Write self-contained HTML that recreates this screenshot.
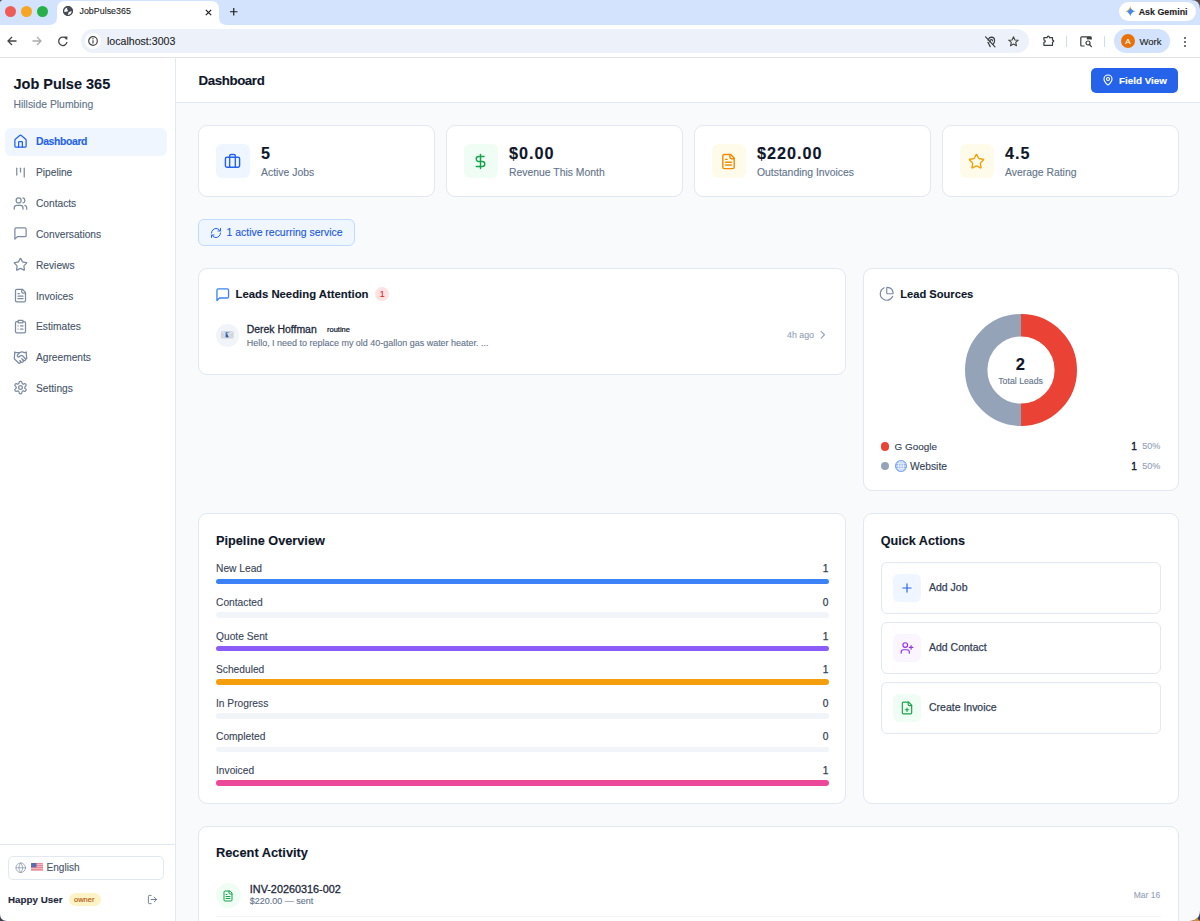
<!DOCTYPE html><html><head><meta charset="utf-8"><title>JobPulse365</title>
<style>
html,body{margin:0;padding:0;width:1200px;height:921px;overflow:hidden;background:#f8fafc;font-family:"Liberation Sans",sans-serif;}
.a{position:absolute;box-sizing:border-box;}
.t{position:absolute;line-height:1;white-space:nowrap;-webkit-text-stroke:0.12px currentColor;}
svg.a{overflow:visible;}
</style></head><body>

<div class="a" style="left:0px;top:0px;width:1200px;height:25px;background:#d3e3fd;"></div>
<div class="a" style="left:5px;top:5.5px;width:11px;height:11px;border-radius:50%;background:#ee5d55;"></div>
<div class="a" style="left:21px;top:5.5px;width:11px;height:11px;border-radius:50%;background:#f5a623;"></div>
<div class="a" style="left:37px;top:5.5px;width:11px;height:11px;border-radius:50%;background:#27b04a;"></div>
<svg class="a" style="left:49px;top:0px;" width="178" height="26" viewBox="0 0 178 26"><path d="M0 25 Q8 25 8 17 L8 9 Q8 1 16 1 L162 1 Q170 1 170 9 L170 17 Q170 25 178 25 L178 26 L0 26 Z" fill="#fff"/></svg>
<svg class="a" style="left:63px;top:6px;" width="10" height="10" viewBox="0 0 10 10"><circle cx="5" cy="5" r="5" fill="#474a52"/><path d="M1.5 3.6 Q2.6 1.8 4.4 1.5 Q3.6 2.8 4.3 3.6 Q5.3 4.4 4.6 5.4 Q3 5.4 1.3 5.9 Q1.1 4.6 1.5 3.6Z" fill="#fff"/><path d="M8.7 5 Q8.8 7.4 6.8 8.6 Q5.6 9.1 4.6 8.9 Q5.8 7.6 5.2 6.8 Q6.2 5.4 8.7 5Z" fill="#fff"/><circle cx="5" cy="5" r="4.5" stroke="#474a52" stroke-width="1" fill="none"/></svg>
<div class="t" style="left:79.50px;top:6.77px;font-size:8.9px;font-weight:400;color:#1f1f1f;">JobPulse365</div>
<svg class="a" style="left:204.5px;top:8.5px;" width="7" height="7" viewBox="0 0 7 7"><path d="M.8 .8 L6.2 6.2 M6.2 .8 L.8 6.2" stroke="#1f1f1f" stroke-width="1.2"/></svg>
<svg class="a" style="left:229.5px;top:7.5px;" width="7.5" height="7.5" viewBox="0 0 7.5 7.5"><path d="M3.75 0 V7.5 M0 3.75 H7.5" stroke="#1f1f1f" stroke-width="1.2"/></svg>
<div class="a" style="left:1119px;top:1.5px;width:77px;height:19.5px;background:#fff;border-radius:10px;"></div>
<svg class="a" style="left:1124.5px;top:5.5px;" width="10.5" height="10.5" viewBox="0 0 10.5 10.5"><defs><linearGradient id="gg" x1="0" y1="0" x2="1" y2="1"><stop offset="0" stop-color="#f0444a"/><stop offset=".3" stop-color="#f9a825"/><stop offset=".45" stop-color="#4285f4"/><stop offset=".7" stop-color="#4285f4"/><stop offset="1" stop-color="#34a853"/></linearGradient></defs><path d="M5.25 0 Q5.9 4.6 10.5 5.25 Q5.9 5.9 5.25 10.5 Q4.6 5.9 0 5.25 Q4.6 4.6 5.25 0Z" fill="url(#gg)"/></svg>
<div class="t" style="left:1138.70px;top:8.07px;font-size:8.9px;font-weight:700;color:#1f1f1f;">Ask Gemini</div>
<div class="a" style="left:0px;top:25px;width:1200px;height:32px;background:#fff;"></div>
<div class="a" style="left:0px;top:57px;width:1200px;height:1px;background:#e3e3e3;"></div>
<svg class="a" style="left:7px;top:36px;" width="10" height="10" viewBox="0 0 10 10"><path d="M9.5 5 H1 M5 1 L1 5 L5 9" stroke="#444746" stroke-width="1.3" fill="none"/></svg>
<svg class="a" style="left:32px;top:36px;" width="10" height="10" viewBox="0 0 10 10"><path d="M.5 5 H9 M5 1 L9 5 L5 9" stroke="#a8abad" stroke-width="1.3" fill="none"/></svg>
<svg class="a" style="left:57.5px;top:36px;" width="10" height="10" viewBox="0 0 10 10"><path d="M8.6 3.4 A4.2 4.2 0 1 0 9 6" stroke="#444746" stroke-width="1.3" fill="none"/><path d="M6.2 .6 L9.4 .6 L9.4 3.8 Z" fill="#444746"/></svg>
<div class="a" style="left:81px;top:29px;width:948px;height:24px;background:#edf2fa;border-radius:12px;"></div>
<div class="a" style="left:84.5px;top:33.3px;width:16px;height:16px;background:#fff;border-radius:50%;"></div>
<svg class="a" style="left:87.5px;top:36.3px;" width="10" height="10" viewBox="0 0 10 10"><circle cx="5" cy="5" r="4.3" stroke="#444746" stroke-width="1.2" fill="none"/><path d="M5 4.3 V7.6" stroke="#444746" stroke-width="1.2"/><circle cx="5" cy="2.7" r=".7" fill="#444746"/></svg>
<div class="t" style="left:107.00px;top:36.13px;font-size:10.6px;font-weight:400;color:#1f1f1f;">localhost:3003</div>
<svg class="a" style="left:984.5px;top:35.5px;" width="11" height="12" viewBox="0 0 11 12"><path d="M3.2 4.2 Q4 1.2 6.6 1.2 Q9.6 1.4 9.6 4.6 Q9.6 6.8 8 8.2" stroke="#3c4043" stroke-width="1.2" fill="none" stroke-linecap="round"/><path d="M5 6.6 Q4.6 3.6 6.6 3.6 Q7.8 3.8 7.4 5.4" stroke="#3c4043" stroke-width="1.1" fill="none"/><path d="M3 6.4 L5.2 10.6" stroke="#3c4043" stroke-width="1.2" stroke-linecap="round"/><path d="M.6 .8 L10 10.8" stroke="#3c4043" stroke-width="1.2" stroke-linecap="round"/></svg>
<svg class="a" style="left:1007.5px;top:35.5px;" width="11" height="11" viewBox="0 0 11 11"><path d="M5.5 .8 L6.9 4 L10.3 4.2 L7.7 6.4 L8.5 9.8 L5.5 8 L2.5 9.8 L3.3 6.4 L.7 4.2 L4.1 4 Z" stroke="#444746" stroke-width="1.1" fill="none" stroke-linejoin="round"/></svg>
<svg class="a" style="left:1043px;top:35px;" width="11.5" height="11.5" viewBox="0 0 11.5 11.5"><path d="M.9 2.6 H4.1 Q4.3 1.1 5.3 1.1 Q6.3 1.1 6.5 2.6 H9.5 V5.1 Q10.8 5.3 10.8 6.1 Q10.8 6.9 9.5 7.1 V10.3 H.9 V7.3 Q2.3 7.1 2.3 6.2 Q2.3 5.2 .9 5 Z" stroke="#3c4043" stroke-width="1.2" fill="none" stroke-linejoin="round"/></svg>
<div class="a" style="left:1066px;top:35.5px;width:1.2px;height:11px;background:#c9dcfa;"></div>
<svg class="a" style="left:1080px;top:36px;" width="12.5" height="11.5" viewBox="0 0 12.5 11.5"><path d="M4.6 10 H1.8 Q.8 10 .8 9 V1.8 Q.8 .8 1.8 .8 H10.4 Q11.2 .8 11.2 1.8 V3.6" stroke="#3c4043" stroke-width="1.2" fill="none"/><rect x="6.8" y=".8" width="4.4" height="2.6" fill="#3c4043"/><circle cx="8" cy="7" r="2" stroke="#3c4043" stroke-width="1.2" fill="none"/><path d="M9.5 8.5 L11.4 10.6" stroke="#3c4043" stroke-width="1.2" stroke-linecap="round"/></svg>
<div class="a" style="left:1104px;top:35.5px;width:1.2px;height:11px;background:#c9dcfa;"></div>
<div class="a" style="left:1114px;top:29px;width:55.5px;height:24px;background:#d3e3fd;border-radius:12px;"></div>
<div class="a" style="left:1121px;top:34px;width:14px;height:14px;background:#e8710a;border-radius:50%;"></div>
<div class="t" style="left:928.00px;width:400px;text-align:center;top:37.73px;font-size:8px;font-weight:400;color:#fff;">A</div>
<div class="t" style="left:1139.50px;top:37.26px;font-size:9.5px;font-weight:400;color:#1f1f1f;">Work</div>
<div class="a" style="left:1184px;top:36.5px;width:2px;height:2px;background:#444746;border-radius:50%;"></div>
<div class="a" style="left:1184px;top:40.5px;width:2px;height:2px;background:#444746;border-radius:50%;"></div>
<div class="a" style="left:1184px;top:44.5px;width:2px;height:2px;background:#444746;border-radius:50%;"></div>
<div class="a" style="left:0px;top:58px;width:175px;height:863px;background:#fff;"></div>
<div class="a" style="left:175px;top:58px;width:1px;height:863px;background:#e2e8f0;"></div>
<div class="t" style="left:13.50px;top:77.43px;font-size:14.5px;font-weight:700;color:#0f172a;">Job Pulse 365</div>
<div class="t" style="left:13.50px;top:100.00px;font-size:10.4px;font-weight:400;color:#64748b;">Hillside Plumbing</div>
<div class="a" style="left:5px;top:128px;width:162px;height:28px;background:#eff6ff;border-radius:6px;"></div>
<svg class="a" style="left:12.75px;top:134.0px" width="15" height="15" viewBox="0 0 24 24" fill="none" stroke="#2563eb" stroke-width="2" stroke-linecap="round" stroke-linejoin="round"><path d="M15 21v-8a1 1 0 0 0-1-1h-4a1 1 0 0 0-1 1v8"/><path d="M3 10a2 2 0 0 1 .709-1.528l7-5.999a2 2 0 0 1 2.582 0l7 5.999A2 2 0 0 1 21 10v9a2 2 0 0 1-2 2H5a2 2 0 0 1-2-2z"/></svg>
<div class="t" style="left:36.00px;top:137.00px;font-size:10.4px;font-weight:700;color:#2563eb;letter-spacing:-0.35px;">Dashboard</div>
<svg class="a" style="left:12.75px;top:164.8px" width="15" height="15" viewBox="0 0 24 24" fill="none" stroke="#7d8ba1" stroke-width="2" stroke-linecap="round" stroke-linejoin="round"><path d="M6 5v11"/><path d="M12 5v6"/><path d="M18 5v14"/></svg>
<div class="t" style="left:36.00px;top:168.37px;font-size:10.2px;font-weight:400;color:#475569;">Pipeline</div>
<svg class="a" style="left:12.75px;top:195.6px" width="15" height="15" viewBox="0 0 24 24" fill="none" stroke="#7d8ba1" stroke-width="2" stroke-linecap="round" stroke-linejoin="round"><path d="M16 21v-2a4 4 0 0 0-4-4H6a4 4 0 0 0-4 4v2"/><circle cx="9" cy="7" r="4"/><path d="M22 21v-2a4 4 0 0 0-3-3.87"/><path d="M16 3.13a4 4 0 0 1 0 7.75"/></svg>
<div class="t" style="left:36.00px;top:199.17px;font-size:10.2px;font-weight:400;color:#475569;">Contacts</div>
<svg class="a" style="left:12.75px;top:226.4px" width="15" height="15" viewBox="0 0 24 24" fill="none" stroke="#7d8ba1" stroke-width="2" stroke-linecap="round" stroke-linejoin="round"><path d="M21 15a2 2 0 0 1-2 2H7l-4 4V5a2 2 0 0 1 2-2h14a2 2 0 0 1 2 2z"/></svg>
<div class="t" style="left:36.00px;top:229.97px;font-size:10.2px;font-weight:400;color:#475569;">Conversations</div>
<svg class="a" style="left:12.75px;top:257.2px" width="15" height="15" viewBox="0 0 24 24" fill="none" stroke="#7d8ba1" stroke-width="2" stroke-linecap="round" stroke-linejoin="round"><path d="M11.525 2.295a.53.53 0 0 1 .95 0l2.31 4.679a2.123 2.123 0 0 0 1.595 1.16l5.166.756a.53.53 0 0 1 .294.904l-3.736 3.638a2.123 2.123 0 0 0-.611 1.878l.882 5.14a.53.53 0 0 1-.771.56l-4.618-2.428a2.122 2.122 0 0 0-1.973 0L6.396 21.01a.53.53 0 0 1-.77-.56l.881-5.139a2.122 2.122 0 0 0-.611-1.879L2.16 9.795a.53.53 0 0 1 .294-.906l5.165-.755a2.122 2.122 0 0 0 1.597-1.16z"/></svg>
<div class="t" style="left:36.00px;top:260.77px;font-size:10.2px;font-weight:400;color:#475569;">Reviews</div>
<svg class="a" style="left:12.75px;top:288.0px" width="15" height="15" viewBox="0 0 24 24" fill="none" stroke="#7d8ba1" stroke-width="2" stroke-linecap="round" stroke-linejoin="round"><path d="M15 2H6a2 2 0 0 0-2 2v16a2 2 0 0 0 2 2h12a2 2 0 0 0 2-2V7Z"/><path d="M14 2v4a2 2 0 0 0 2 2h4"/><path d="M10 9H8"/><path d="M16 13H8"/><path d="M16 17H8"/></svg>
<div class="t" style="left:36.00px;top:291.57px;font-size:10.2px;font-weight:400;color:#475569;">Invoices</div>
<svg class="a" style="left:12.75px;top:318.8px" width="15" height="15" viewBox="0 0 24 24" fill="none" stroke="#7d8ba1" stroke-width="2" stroke-linecap="round" stroke-linejoin="round"><rect width="8" height="4" x="8" y="2" rx="1" ry="1"/><path d="M16 4h2a2 2 0 0 1 2 2v14a2 2 0 0 1-2 2H6a2 2 0 0 1-2-2V6a2 2 0 0 1 2-2h2"/><path d="M12 11h4"/><path d="M12 16h4"/><path d="M8 11h.01"/><path d="M8 16h.01"/></svg>
<div class="t" style="left:36.00px;top:322.37px;font-size:10.2px;font-weight:400;color:#475569;">Estimates</div>
<svg class="a" style="left:12.75px;top:349.59999999999997px" width="15" height="15" viewBox="0 0 24 24" fill="none" stroke="#7d8ba1" stroke-width="2" stroke-linecap="round" stroke-linejoin="round"><path d="m11 17 2 2a1 1 0 1 0 3-3"/><path d="m14 14 2.5 2.5a1 1 0 1 0 3-3l-3.88-3.88a3 3 0 0 0-4.24 0l-.88.88a1 1 0 1 1-3-3l2.81-2.81a5.790 5.790 0 0 1 7.06-.87l.47.28a2 2 0 0 0 1.42.25L21 4"/><path d="m21 3 1 11h-2"/><path d="M3 3 2 14l6.5 6.5a1 1 0 1 0 3-3"/><path d="M3 4h8"/></svg>
<div class="t" style="left:36.00px;top:353.17px;font-size:10.2px;font-weight:400;color:#475569;">Agreements</div>
<svg class="a" style="left:12.75px;top:380.40000000000003px" width="15" height="15" viewBox="0 0 24 24" fill="none" stroke="#7d8ba1" stroke-width="2" stroke-linecap="round" stroke-linejoin="round"><path d="M12.22 2h-.44a2 2 0 0 0-2 2v.18a2 2 0 0 1-1 1.73l-.43.25a2 2 0 0 1-2 0l-.15-.08a2 2 0 0 0-2.730.73l-.22.38a2 2 0 0 0 .73 2.73l.15.1a2 2 0 0 1 1 1.72v.51a2 2 0 0 1-1 1.740l-.15.09a2 2 0 0 0-.73 2.73l.22.38a2 2 0 0 0 2.73.73l.15-.08a2 2 0 0 1 2 0l.43.25a2 2 0 0 1 1 1.73V20a2 2 0 0 0 2 2h.44a2 2 0 0 0 2-2v-.18a2 2 0 0 1 1-1.73l.43-.25a2 2 0 0 1 2 0l.15.08a2 2 0 0 0 2.73-.73l.22-.39a2 2 0 0 0-.73-2.73l-.15-.08a2 2 0 0 1-1-1.74v-.5a2 2 0 0 1 1-1.74l.15-.09a2 2 0 0 0 .73-2.73l-.22-.38a2 2 0 0 0-2.73-.73l-.15.08a2 2 0 0 1-2 0l-.43-.25a2 2 0 0 1-1-1.73V4a2 2 0 0 0-2-2z"/><circle cx="12" cy="12" r="3"/></svg>
<div class="t" style="left:36.00px;top:383.97px;font-size:10.2px;font-weight:400;color:#475569;">Settings</div>
<div class="a" style="left:0px;top:844px;width:175px;height:1px;background:#e2e8f0;"></div>
<div class="a" style="left:8px;top:856px;width:156px;height:24px;background:#fff;border:1px solid #e2e8f0;border-radius:5px;"></div>
<svg class="a" style="left:14.5px;top:862px" width="11.5" height="11.5" viewBox="0 0 24 24" fill="none" stroke="#8e9bb0" stroke-width="1.7" stroke-linecap="round" stroke-linejoin="round"><circle cx="12" cy="12" r="10"/><path d="M12 2a14.5 14.5 0 0 0 0 20 14.5 14.5 0 0 0 0-20"/><path d="M2 12h20"/></svg>
<svg class="a" style="left:31px;top:863px;" width="12" height="8" viewBox="0 0 12 8"><rect width="12" height="8" rx="1" fill="#e8838f"/><path d="M0 1.5H12M0 3.5H12M0 5.5H12M0 7.3H12" stroke="#f3c3cc" stroke-width=".8"/><rect width="5.5" height="4.2" rx=".6" fill="#5b6bb0"/></svg>
<div class="t" style="left:46.50px;top:862.95px;font-size:10.1px;font-weight:400;color:#475569;">English</div>
<div class="t" style="left:8.00px;top:894.90px;font-size:9.8px;font-weight:700;color:#1e293b;">Happy User</div>
<div class="a" style="left:69px;top:893px;width:32px;height:13px;background:#fef3c7;border-radius:7px;"></div>
<div class="t" style="left:74.00px;top:896.15px;font-size:7.5px;font-weight:400;color:#b45309;">owner</div>
<svg class="a" style="left:147px;top:894px" width="11" height="11" viewBox="0 0 24 24" fill="none" stroke="#64748b" stroke-width="2" stroke-linecap="round" stroke-linejoin="round"><path d="M9 21H5a2 2 0 0 1-2-2V5a2 2 0 0 1 2-2h4"/><polyline points="16 17 21 12 16 7"/><line x1="21" x2="9" y1="12" y2="12"/></svg>
<div class="a" style="left:176px;top:58px;width:1024px;height:44px;background:#fff;"></div>
<div class="a" style="left:176px;top:102px;width:1024px;height:1px;background:#e2e8f0;"></div>
<div class="t" style="left:198.50px;top:74.44px;font-size:13.3px;font-weight:700;color:#0f172a;letter-spacing:-0.4px;">Dashboard</div>
<div class="a" style="left:1091px;top:67.5px;width:87px;height:25.5px;background:#2563eb;border-radius:5px;"></div>
<svg class="a" style="left:1101.5px;top:74px" width="12" height="12" viewBox="0 0 24 24" fill="none" stroke="#fff" stroke-width="2.3" stroke-linecap="round" stroke-linejoin="round"><path d="M20 10c0 4.993-5.539 10.193-7.399 11.799a1 1 0 0 1-1.202 0C9.539 20.193 4 14.993 4 10a8 8 0 0 1 16 0"/><circle cx="12" cy="10" r="3"/></svg>
<div class="t" style="left:1119.00px;top:76.36px;font-size:9.85px;font-weight:700;color:#fff;">Field View</div>
<div class="a" style="left:198px;top:125px;width:237px;height:72px;background:#fff;border:1px solid #e2e8f0;border-radius:9px;"></div>
<div class="a" style="left:216px;top:144px;width:33.5px;height:34px;background:#eff6ff;border-radius:6px;"></div>
<svg class="a" style="left:224.25px;top:152.8px" width="17" height="17" viewBox="0 0 24 24" fill="none" stroke="#2563eb" stroke-width="2" stroke-linecap="round" stroke-linejoin="round"><path d="M16 20V4a2 2 0 0 0-2-2h-4a2 2 0 0 0-2 2v16"/><rect width="20" height="14" x="2" y="6" rx="2"/></svg>
<div class="t" style="left:261.00px;top:145.39px;font-size:16.2px;font-weight:700;color:#0f172a;letter-spacing:1.0px;">5</div>
<div class="t" style="left:261.00px;top:168.00px;font-size:10.4px;font-weight:400;color:#64748b;">Active Jobs</div>
<div class="a" style="left:446px;top:125px;width:237px;height:72px;background:#fff;border:1px solid #e2e8f0;border-radius:9px;"></div>
<div class="a" style="left:464px;top:144px;width:33.5px;height:34px;background:#f0fdf4;border-radius:6px;"></div>
<svg class="a" style="left:472.25px;top:152.8px" width="17" height="17" viewBox="0 0 24 24" fill="none" stroke="#16a34a" stroke-width="2" stroke-linecap="round" stroke-linejoin="round"><line x1="12" x2="12" y1="2" y2="22"/><path d="M17 5H9.5a3.5 3.5 0 0 0 0 7h5a3.5 3.5 0 0 1 0 7H6"/></svg>
<div class="t" style="left:509.00px;top:145.39px;font-size:16.2px;font-weight:700;color:#0f172a;letter-spacing:1.0px;">$0.00</div>
<div class="t" style="left:509.00px;top:168.00px;font-size:10.4px;font-weight:400;color:#64748b;">Revenue This Month</div>
<div class="a" style="left:694px;top:125px;width:237px;height:72px;background:#fff;border:1px solid #e2e8f0;border-radius:9px;"></div>
<div class="a" style="left:712px;top:144px;width:33.5px;height:34px;background:#fffbeb;border-radius:6px;"></div>
<svg class="a" style="left:720.25px;top:152.8px" width="17" height="17" viewBox="0 0 24 24" fill="none" stroke="#f08a05" stroke-width="2" stroke-linecap="round" stroke-linejoin="round"><path d="M15 2H6a2 2 0 0 0-2 2v16a2 2 0 0 0 2 2h12a2 2 0 0 0 2-2V7Z"/><path d="M14 2v4a2 2 0 0 0 2 2h4"/><path d="M10 9H8"/><path d="M16 13H8"/><path d="M16 17H8"/></svg>
<div class="t" style="left:757.00px;top:145.39px;font-size:16.2px;font-weight:700;color:#0f172a;letter-spacing:1.0px;">$220.00</div>
<div class="t" style="left:757.00px;top:168.00px;font-size:10.4px;font-weight:400;color:#64748b;">Outstanding Invoices</div>
<div class="a" style="left:942px;top:125px;width:237px;height:72px;background:#fff;border:1px solid #e2e8f0;border-radius:9px;"></div>
<div class="a" style="left:960px;top:144px;width:33.5px;height:34px;background:#fffbeb;border-radius:6px;"></div>
<svg class="a" style="left:968.25px;top:152.8px" width="17" height="17" viewBox="0 0 24 24" fill="none" stroke="#f2a20c" stroke-width="2" stroke-linecap="round" stroke-linejoin="round"><path d="M11.525 2.295a.53.53 0 0 1 .95 0l2.31 4.679a2.123 2.123 0 0 0 1.595 1.16l5.166.756a.53.53 0 0 1 .294.904l-3.736 3.638a2.123 2.123 0 0 0-.611 1.878l.882 5.14a.53.53 0 0 1-.771.56l-4.618-2.428a2.122 2.122 0 0 0-1.973 0L6.396 21.01a.53.53 0 0 1-.77-.56l.881-5.139a2.122 2.122 0 0 0-.611-1.879L2.16 9.795a.53.53 0 0 1 .294-.906l5.165-.755a2.122 2.122 0 0 0 1.597-1.16z"/></svg>
<div class="t" style="left:1005.00px;top:145.39px;font-size:16.2px;font-weight:700;color:#0f172a;letter-spacing:1.0px;">4.5</div>
<div class="t" style="left:1005.00px;top:168.00px;font-size:10.4px;font-weight:400;color:#64748b;">Average Rating</div>
<div class="a" style="left:198px;top:219px;width:157px;height:27px;background:#eff6ff;border:1px solid #bfdbfe;border-radius:6px;"></div>
<svg class="a" style="left:210px;top:227px" width="12" height="12" viewBox="0 0 24 24" fill="none" stroke="#2563eb" stroke-width="2" stroke-linecap="round" stroke-linejoin="round"><path d="M3 12a9 9 0 0 1 9-9 9.75 9.75 0 0 1 6.74 2.74L21 8"/><path d="M21 3v5h-5"/><path d="M21 12a9 9 0 0 1-9 9 9.75 9.75 0 0 1-6.74-2.740L3 16"/><path d="M8 16H3v5"/></svg>
<div class="t" style="left:226.50px;top:227.85px;font-size:10.45px;font-weight:400;color:#2158dc;">1 active recurring service</div>
<div class="a" style="left:198px;top:268px;width:648px;height:106.5px;background:#fff;border:1px solid #e2e8f0;border-radius:9px;"></div>
<svg class="a" style="left:215px;top:287px" width="15.5" height="15.5" viewBox="0 0 24 24" fill="none" stroke="#3b82f6" stroke-width="2" stroke-linecap="round" stroke-linejoin="round"><path d="M21 15a2 2 0 0 1-2 2H7l-4 4V5a2 2 0 0 1 2-2h14a2 2 0 0 1 2 2z"/></svg>
<div class="t" style="left:235.50px;top:289.41px;font-size:11.33px;font-weight:700;color:#0f172a;">Leads Needing Attention</div>
<div class="a" style="left:375px;top:287.2px;width:14.3px;height:14px;background:#fee2e2;border-radius:7px;"></div>
<div class="t" style="left:182.20px;width:400px;text-align:center;top:289.95px;font-size:8.8px;font-weight:400;color:#dc2626;">1</div>
<div class="a" style="left:216px;top:324px;width:22.5px;height:22.5px;background:#f1f5f9;border-radius:50%;"></div>
<svg class="a" style="left:220.8px;top:331px;" width="12.6" height="7.6" viewBox="0 0 12.6 7.6"><rect x="0" y="0" width="12.6" height="7.6" rx=".8" fill="#cfd3da"/><path d="M.4 .4 L6.3 4.6 L12.2 .4" stroke="#eef0f3" stroke-width=".9" fill="none"/><path d="M.4 7.2 L4.6 3.6 M12.2 7.2 L8 3.6" stroke="#e3e6ea" stroke-width=".7"/><path d="M5 1.6 H7.4 M5 1.6 V6 H7.4 M5 3.8 H7" stroke="#4f86e8" stroke-width="1"/></svg>
<div class="t" style="left:246.70px;top:324.66px;font-size:10.44px;font-weight:400;color:#1e293b;-webkit-text-stroke:0.3px #1e293b;">Derek Hoffman</div>
<div class="t" style="left:327.00px;top:326.15px;font-size:7.5px;font-weight:400;color:#0f172a;-webkit-text-stroke:0.22px #0f172a;">routine</div>
<div class="t" style="left:246.70px;top:338.91px;font-size:8.97px;font-weight:400;color:#64748b;">Hello, I need to replace my old 40-gallon gas water heater. ...</div>
<div class="t" style="right:386.00px;top:330.53px;font-size:8.83px;font-weight:400;color:#94a3b8;">4h ago</div>
<svg class="a" style="left:816.3px;top:328.3px" width="13.5" height="13.5" viewBox="0 0 24 24" fill="none" stroke="#94a3b8" stroke-width="2" stroke-linecap="round" stroke-linejoin="round"><path d="m9 18 6-6-6-6"/></svg>
<div class="a" style="left:863px;top:268px;width:315.5px;height:223px;background:#fff;border:1px solid #e2e8f0;border-radius:9px;"></div>
<svg class="a" style="left:879.2px;top:286.2px" width="15.5" height="15.5" viewBox="0 0 24 24" fill="none" stroke="#7b8aa0" stroke-width="1.8" stroke-linecap="round" stroke-linejoin="round"><path d="M21 12c.552 0 1.005-.449.95-.998a10 10 0 0 0-8.953-8.951c-.55-.055-.998.398-.998.95v8a1 1 0 0 0 1 1z"/><path d="M21.21 15.89A10 10 0 1 1 8 2.83"/></svg>
<div class="t" style="left:900.30px;top:289.08px;font-size:11.13px;font-weight:700;color:#0f172a;">Lead Sources</div>
<svg class="a" style="left:964.5px;top:314px;" width="112" height="112" viewBox="0 0 112 112"><path d="M56 11.200000000000003 A44.8 44.8 0 0 1 56 100.8" stroke="#ea4335" stroke-width="22.4" fill="none"/><path d="M56 100.8 A44.8 44.8 0 0 1 56 11.200000000000003" stroke="#94a3b8" stroke-width="22.4" fill="none"/></svg>
<div class="t" style="left:820.40px;width:400px;text-align:center;top:356.13px;font-size:16.5px;font-weight:700;color:#0f172a;">2</div>
<div class="t" style="left:820.60px;width:400px;text-align:center;top:377.00px;font-size:8.74px;font-weight:400;color:#64748b;">Total Leads</div>
<div class="a" style="left:880.5px;top:442.4px;width:8.4px;height:8.4px;background:#ea4335;border-radius:50%;"></div>
<div class="t" style="left:894.50px;top:442.09px;font-size:9.93px;font-weight:400;color:#334155;">G Google</div>
<div class="a" style="left:880.5px;top:462px;width:8.4px;height:8.4px;background:#94a3b8;border-radius:50%;"></div>
<svg class="a" style="left:895px;top:459.5px;" width="12" height="12" viewBox="0 0 12 12"><circle cx="6" cy="6" r="5.6" fill="#8fb4f5"/><g stroke="#fff" stroke-width=".8" fill="none"><ellipse cx="6" cy="6" rx="2.4" ry="5.6"/><path d="M.4 6H11.6M1.2 3.2H10.8M1.2 8.8H10.8M6 .4V11.6"/></g><circle cx="6" cy="6" r="5.6" stroke="#5a8ef0" stroke-width=".7" fill="none"/></svg>
<div class="t" style="left:910.00px;top:461.79px;font-size:10.29px;font-weight:400;color:#334155;">Website</div>
<div class="t" style="right:63.20px;top:442.07px;font-size:10.2px;font-weight:400;color:#0f172a;-webkit-text-stroke:0.35px #0f172a;">1</div>
<div class="t" style="left:1142.30px;top:442.48px;font-size:9px;font-weight:400;color:#94a3b8;">50%</div>
<div class="t" style="right:63.20px;top:461.67px;font-size:10.2px;font-weight:400;color:#0f172a;-webkit-text-stroke:0.35px #0f172a;">1</div>
<div class="t" style="left:1142.30px;top:462.08px;font-size:9px;font-weight:400;color:#94a3b8;">50%</div>
<div class="a" style="left:198px;top:513px;width:648px;height:290.5px;background:#fff;border:1px solid #e2e8f0;border-radius:9px;"></div>
<div class="t" style="left:216.00px;top:534.97px;font-size:12.73px;font-weight:700;color:#0f172a;">Pipeline Overview</div>
<div class="t" style="left:216.00px;top:564.35px;font-size:10.22px;font-weight:400;color:#3b4658;">New Lead</div>
<div class="t" style="right:371.50px;top:564.37px;font-size:10.2px;font-weight:400;color:#334155;-webkit-text-stroke:0.25px #334155;">1</div>
<div class="a" style="left:216px;top:578.6px;width:612.5px;height:5.6px;background:#3b82f6;border-radius:3px;"></div>
<div class="t" style="left:216.00px;top:597.95px;font-size:10.22px;font-weight:400;color:#3b4658;">Contacted</div>
<div class="t" style="right:371.50px;top:597.97px;font-size:10.2px;font-weight:400;color:#334155;-webkit-text-stroke:0.25px #334155;">0</div>
<div class="a" style="left:216px;top:612.2px;width:612.5px;height:5.6px;background:#f1f5f9;border-radius:3px;"></div>
<div class="t" style="left:216.00px;top:631.55px;font-size:10.22px;font-weight:400;color:#3b4658;">Quote Sent</div>
<div class="t" style="right:371.50px;top:631.57px;font-size:10.2px;font-weight:400;color:#334155;-webkit-text-stroke:0.25px #334155;">1</div>
<div class="a" style="left:216px;top:645.8000000000001px;width:612.5px;height:5.6px;background:#8b5cf6;border-radius:3px;"></div>
<div class="t" style="left:216.00px;top:665.15px;font-size:10.22px;font-weight:400;color:#3b4658;">Scheduled</div>
<div class="t" style="right:371.50px;top:665.17px;font-size:10.2px;font-weight:400;color:#334155;-webkit-text-stroke:0.25px #334155;">1</div>
<div class="a" style="left:216px;top:679.4000000000001px;width:612.5px;height:5.6px;background:#f59e0b;border-radius:3px;"></div>
<div class="t" style="left:216.00px;top:698.75px;font-size:10.22px;font-weight:400;color:#3b4658;">In Progress</div>
<div class="t" style="right:371.50px;top:698.77px;font-size:10.2px;font-weight:400;color:#334155;-webkit-text-stroke:0.25px #334155;">0</div>
<div class="a" style="left:216px;top:713.0px;width:612.5px;height:5.6px;background:#f1f5f9;border-radius:3px;"></div>
<div class="t" style="left:216.00px;top:732.35px;font-size:10.22px;font-weight:400;color:#3b4658;">Completed</div>
<div class="t" style="right:371.50px;top:732.37px;font-size:10.2px;font-weight:400;color:#334155;-webkit-text-stroke:0.25px #334155;">0</div>
<div class="a" style="left:216px;top:746.6px;width:612.5px;height:5.6px;background:#f1f5f9;border-radius:3px;"></div>
<div class="t" style="left:216.00px;top:765.95px;font-size:10.22px;font-weight:400;color:#3b4658;">Invoiced</div>
<div class="t" style="right:371.50px;top:765.97px;font-size:10.2px;font-weight:400;color:#334155;-webkit-text-stroke:0.25px #334155;">1</div>
<div class="a" style="left:216px;top:780.2px;width:612.5px;height:5.6px;background:#ec4899;border-radius:3px;"></div>
<div class="a" style="left:863px;top:513px;width:315.5px;height:290.5px;background:#fff;border:1px solid #e2e8f0;border-radius:9px;"></div>
<div class="t" style="left:880.75px;top:534.92px;font-size:12.62px;font-weight:700;color:#0f172a;">Quick Actions</div>
<div class="a" style="left:880.5px;top:562.1px;width:280.2px;height:51.5px;background:#fff;border:1px solid #e2e8f0;border-radius:6px;"></div>
<div class="a" style="left:892.5px;top:574.0px;width:28.3px;height:28.3px;background:#eff6ff;border-radius:6px;"></div>
<svg class="a" style="left:899.5px;top:580.7px" width="14" height="14" viewBox="0 0 24 24" fill="none" stroke="#2563eb" stroke-width="2" stroke-linecap="round" stroke-linejoin="round"><path d="M5 12h14"/><path d="M12 5v14"/></svg>
<div class="t" style="left:929.00px;top:582.92px;font-size:10.49px;font-weight:400;color:#334155;-webkit-text-stroke:0.25px #334155;">Add Job</div>
<div class="a" style="left:880.5px;top:622.1px;width:280.2px;height:51.5px;background:#fff;border:1px solid #e2e8f0;border-radius:6px;"></div>
<div class="a" style="left:892.5px;top:634.0px;width:28.3px;height:28.3px;background:#faf5ff;border-radius:6px;"></div>
<svg class="a" style="left:899.5px;top:640.7px" width="14" height="14" viewBox="0 0 24 24" fill="none" stroke="#9333ea" stroke-width="2" stroke-linecap="round" stroke-linejoin="round"><path d="M16 21v-2a4 4 0 0 0-4-4H6a4 4 0 0 0-4 4v2"/><circle cx="9" cy="7" r="4"/><line x1="19" x2="19" y1="8" y2="14"/><line x1="22" x2="16" y1="11" y2="11"/></svg>
<div class="t" style="left:929.00px;top:642.92px;font-size:10.49px;font-weight:400;color:#334155;-webkit-text-stroke:0.25px #334155;">Add Contact</div>
<div class="a" style="left:880.5px;top:682.1px;width:280.2px;height:51.5px;background:#fff;border:1px solid #e2e8f0;border-radius:6px;"></div>
<div class="a" style="left:892.5px;top:694.0px;width:28.3px;height:28.3px;background:#f0fdf4;border-radius:6px;"></div>
<svg class="a" style="left:899.5px;top:700.7px" width="14" height="14" viewBox="0 0 24 24" fill="none" stroke="#16a34a" stroke-width="2" stroke-linecap="round" stroke-linejoin="round"><path d="M15 2H6a2 2 0 0 0-2 2v16a2 2 0 0 0 2 2h12a2 2 0 0 0 2-2V7Z"/><path d="M14 2v4a2 2 0 0 0 2 2h4"/><path d="M9 15h6"/><path d="M12 18v-6"/></svg>
<div class="t" style="left:929.00px;top:702.92px;font-size:10.49px;font-weight:400;color:#334155;-webkit-text-stroke:0.25px #334155;">Create Invoice</div>
<div class="a" style="left:198px;top:826px;width:981px;height:120px;background:#fff;border:1px solid #e2e8f0;border-radius:9px;"></div>
<div class="t" style="left:216.00px;top:846.76px;font-size:12.8px;font-weight:700;color:#0f172a;">Recent Activity</div>
<div class="a" style="left:216px;top:883.2px;width:24.8px;height:24.8px;background:#f0fdf4;border-radius:50%;"></div>
<svg class="a" style="left:222.4px;top:889.6px" width="12" height="12" viewBox="0 0 24 24" fill="none" stroke="#16a34a" stroke-width="2" stroke-linecap="round" stroke-linejoin="round"><path d="M15 2H6a2 2 0 0 0-2 2v16a2 2 0 0 0 2 2h12a2 2 0 0 0 2-2V7Z"/><path d="M14 2v4a2 2 0 0 0 2 2h4"/><path d="M10 9H8"/><path d="M16 13H8"/><path d="M16 17H8"/></svg>
<div class="t" style="left:249.80px;top:883.62px;font-size:10.84px;font-weight:400;color:#1e293b;-webkit-text-stroke:0.3px #1e293b;">INV-20260316-002</div>
<div class="t" style="left:249.80px;top:897.41px;font-size:8.97px;font-weight:400;color:#64748b;">$220.00 — sent</div>
<div class="t" style="right:39.80px;top:891.20px;font-size:8.5px;font-weight:400;color:#94a3b8;">Mar 16</div>
<div class="a" style="left:216px;top:916px;width:944.5px;height:1px;background:#f1f5f9;"></div>
<svg class="a" style="left:0px;top:0px;" width="8" height="8" viewBox="0 0 8 8"><path d="M0 0 H3 Q0 0 0 3 Z" fill="#3a3d45"/></svg>
<svg class="a" style="left:1190px;top:0px;" width="10" height="10" viewBox="0 0 10 10"><path d="M10 0 V9 Q10 0 1 0 Z" fill="#5a4a4a"/></svg>
<svg class="a" style="left:0px;top:914px;" width="7" height="7" viewBox="0 0 7 7"><path d="M0 7 V0 Q0 7 7 7 Z" fill="#3a4050"/></svg>
<svg class="a" style="left:1188px;top:909px;" width="12" height="12" viewBox="0 0 12 12"><path d="M12 12 V1 Q12 12 1 12 Z" fill="#34405a"/><path d="M12 12 H4 Q7 11 9 9 L12 12Z" fill="#d98a3a"/></svg>
</body></html>
